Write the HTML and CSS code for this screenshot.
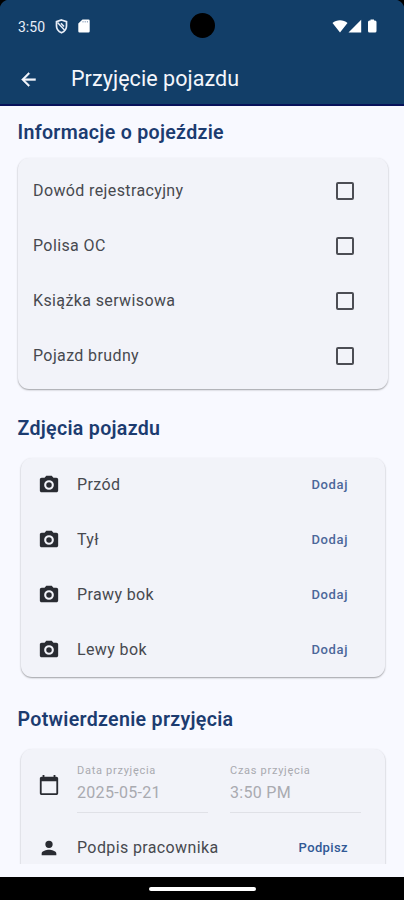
FILE: index.html
```html
<!DOCTYPE html>
<html lang="pl">
<head>
<meta charset="utf-8">
<title>Przyjęcie pojazdu</title>
<link rel="stylesheet" href="styles.css">
</head>
<body>
<svg class="defs" width="0" height="0">
  <symbol id="camera" viewBox="0 0 24 24">
    <path fill-rule="evenodd" d="M9 2 7.170 4H4c-1.100 0-2 .9-2 2v12c0 1.100.9 2 2 2h16c1.100 0 2-.9 2-2V6c0-1.100-.9-2-2-2h-3.170L15 2zM12 17.300a5.300 5.300 0 1 1 0-10.600 5.300 5.300 0 0 1 0 10.600z"/>
    <circle cx="12" cy="12" r="3"/>
  </symbol>
</svg>
<div class="phone">
  <header class="top">
    <div class="status">
      <span class="clock">3:50</span>
      <svg class="shield" viewBox="0 0 13 15"><path d="M6.500 1 11.500 2.700V7c0 3-2 5.500-5 6.800C3.500 12.500 1.500 10 1.500 7V2.700z" fill="none" stroke="#e9eef8" stroke-width="1.700"/><path d="M2.500 3.500 9.500 11M6 4.300 9 7.500" stroke="#e9eef8" stroke-width="1.500"/></svg>
      <svg class="sd" viewBox="0 0 12 14"><path d="M4.500.5H10.500a1.200 1.200 0 0 1 1.200 1.200v10.600a1.200 1.200 0 0 1-1.200 1.200h-9A1.200 1.200 0 0 1 .3 12.300V4.500z" fill="#fff"/><path d="M5 2v1.500M7.200 2v1.500M9.400 2v1.500" stroke="#8fa3bd" stroke-width="1"/></svg>
      <svg class="signals" viewBox="0 0 46 15"><path d="M.5 4C4.500.3 11.500.3 15.500 4L8 13.500zM16.500 13.500 29.200.8v12.700z" fill="#fff"/><path d="M37.500 1.500h1V.5h3.500v1h1q1.500 0 1.500 1.500v9q0 1.500-1.500 1.500h-5.500q-1.500 0-1.500-1.500V3q0-1.500 1.500-1.500z" fill="#fff"/></svg>
    </div>
    <span class="lens"></span>
    <div class="appbar">
      <svg class="back" viewBox="0 0 24 24"><path d="M20 11H7.830l5.590-5.590L12 4l-8 8 8 8 1.410-1.410L7.830 13H20z" fill="#f4f6fc" stroke="#f4f6fc" stroke-width=".5"/></svg>
      <h1>Przyjęcie pojazdu</h1>
    </div>
  </header>
  <main>
    <h2 class="h-info">Informacje o pojeździe</h2>
    <section class="card checks">
      <label class="row"><span>Dowód rejestracyjny</span><i class="box"></i></label>
      <label class="row"><span>Polisa OC</span><i class="box"></i></label>
      <label class="row"><span>Książka serwisowa</span><i class="box"></i></label>
      <label class="row"><span>Pojazd brudny</span><i class="box"></i></label>
    </section>
    <h2 class="h-photos">Zdjęcia pojazdu</h2>
    <section class="card photos">
      <div class="row"><svg class="icon"><use href="#camera"/></svg><span>Przód</span><a class="action">Dodaj</a></div>
      <div class="row"><svg class="icon"><use href="#camera"/></svg><span>Tył</span><a class="action">Dodaj</a></div>
      <div class="row"><svg class="icon"><use href="#camera"/></svg><span>Prawy bok</span><a class="action">Dodaj</a></div>
      <div class="row"><svg class="icon"><use href="#camera"/></svg><span>Lewy bok</span><a class="action">Dodaj</a></div>
    </section>
    <h2 class="h-confirm">Potwierdzenie przyjęcia</h2>
    <section class="card confirm">
      <div class="dates">
        <svg class="icon" viewBox="0 0 24 24"><path fill-rule="evenodd" d="M20 3h-1V1h-2v2H7V1H5v2H4c-1.100 0-2 .9-2 2v16c0 1.100.9 2 2 2h16c1.100 0 2-.9 2-2V5c0-1.100-.9-2-2-2zm0 18H4V8h16z"/></svg>
        <div class="field"><small>Data przyjęcia</small><b>2025-05-21</b></div>
        <div class="field"><small>Czas przyjęcia</small><b>3:50 PM</b></div>
      </div>
      <div class="row"><svg class="icon" viewBox="0 0 24 24"><path d="M12 12a4 4 0 1 0 0-8 4 4 0 0 0 0 8zm0 2c-2.670 0-8 1.340-8 4v2h16v-2c0-2.660-5.330-4-8-4z"/></svg><span>Podpis pracownika</span><a class="action sign">Podpisz</a></div>
    </section>
  </main>
  <footer><span class="handle"></span></footer>
</div>
</body>
</html>
```
FILE: styles.css
```css
* { box-sizing: border-box; }
body { margin: 0; background: #000; font-family: Roboto, sans-serif; }
.defs { position: absolute; }
.phone { width: 404px; height: 900px; display: flex; flex-direction: column; overflow: hidden; background: #f8f9ff; }
.top { position: relative; flex: none; height: 106px; background: #123e68; border-bottom: 2px solid #07125a; }
.top::before { content: ""; position: absolute; inset: 0 0 auto; height: 10px; background: radial-gradient(circle at 10px 10px, transparent 10px, #000 11px) left / 10px 10px no-repeat, radial-gradient(circle at 0 10px, transparent 10px, #000 11px) right / 10px 10px no-repeat; }
.lens { position: absolute; left: 190px; top: 13px; width: 25px; height: 25px; border-radius: 50%; background: #000; }
.status { display: flex; align-items: center; height: 52px; padding: 0 26px 0 18px; }
.clock { width: 37px; padding-top: 1px; font-size: 14px; font-weight: 400; color: #e9eef8; }
.shield { width: 13px; height: 15px; }
.sd { width: 12px; height: 14px; margin-left: 10px; }
.signals { width: 46px; height: 15px; margin-left: auto; }
.appbar { display: flex; align-items: center; height: 52px; padding: 2px 18px 0; }
.back { width: 21px; height: 21px; }
h1 { margin: 0 0 0 32px; font-size: 21.500px; font-weight: 400; color: #f4f6fc; line-height: 30px; letter-spacing: .06px; }
main { flex: none; height: 758px; overflow: hidden; }
h2 { margin: 0; padding-left: 17.500px; font-size: 19.600px; font-weight: 600; line-height: 28px; letter-spacing: .3px; color: #1c3c70; }
.h-info { margin-top: 13px; }
.h-photos { margin-top: 26px; }
.h-confirm { margin-top: 29px; }
.card { background: #f2f3f9; border-radius: 11px; box-shadow: 0 1px 2px rgba(0,0,0,.3), 0 1px 1px rgba(0,0,0,.08); color: #47494f; }
.checks { margin: 11px 16px 0 18px; padding: 5px 34px 6px 15px; height: 231px; }
.photos { margin: 15px 19px 0 21px; height: 219px; }
.confirm { margin: 15px 19px 0 21px; height: 200px; }
.row { display: flex; align-items: center; height: 55px; font-size: 16px; letter-spacing: .38px; }
.box { width: 18px; height: 18px; margin-left: auto; border: 2px solid #4c4d54; border-radius: 2px; }
.photos .row, .confirm .row { padding: 0 37px 0 17px; }
.photos .row:first-child { height: 53px; margin-bottom: 1px; }
.icon { flex: none; width: 22px; height: 22px; margin-right: 17px; fill: #292b32; }
.action { margin-left: auto; font-size: 13px; font-weight: 500; color: #4c679a; letter-spacing: .6px; }
.sign { color: #315995; letter-spacing: .38px; }
.dates { display: flex; align-items: flex-start; height: 71px; padding: 13px 24px 0 17px; }
.dates .icon { margin-top: 12px; }
.field { display: flex; flex-direction: column; width: 131px; height: 51px; margin-right: 22px; border-bottom: 1px solid #e0e1e7; color: #a9aab0; }
.field small { font-size: 11px; line-height: 18px; letter-spacing: .72px; }
.field b { font-size: 16px; font-weight: 400; line-height: 25px; letter-spacing: .3px; }
.field:last-child { margin-right: 0; }
footer { display: flex; justify-content: center; height: 23px; margin-top: auto; padding-top: 10px; background: #000; }
.handle { width: 107px; height: 4px; border-radius: 2px; background: #fff; }
```
